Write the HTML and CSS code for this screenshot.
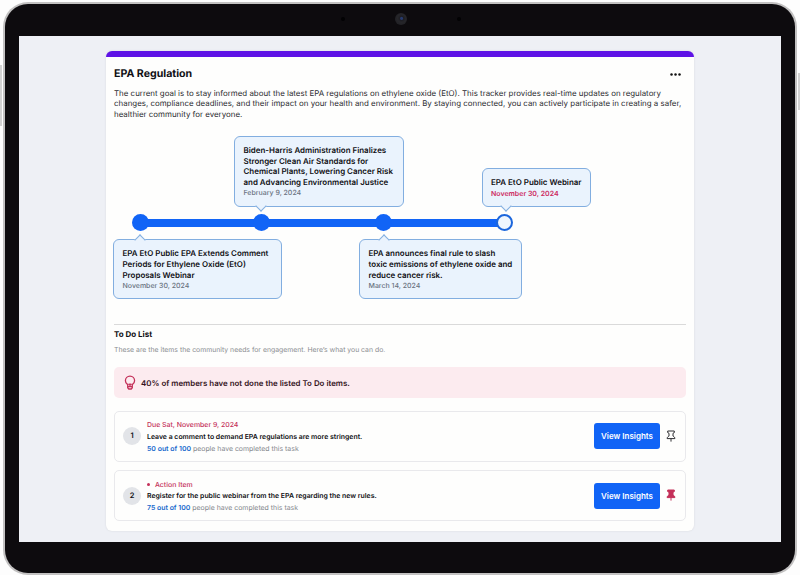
FILE: index.html
```html
<!DOCTYPE html>
<html lang="en">
<head>
<meta charset="utf-8">
<title>EPA Regulation</title>
<link rel="stylesheet" href="styles.css">
</head>
<body>
<div class="tablet">
  <i class="side-key side-key-left"></i>
  <i class="side-key side-key-right"></i>
  <div class="bezel">
    <div class="sensors"><i class="mic"></i><i class="camera"></i><i class="mic"></i></div>
    <main class="screen">
      <article class="card">
        <header class="card-head">
          <h1>EPA Regulation</h1>
          <svg class="more" viewBox="0 0 11 3"><circle cx="1.500" cy="1.500" r="1.250"/><circle cx="5.500" cy="1.500" r="1.250"/><circle cx="9.500" cy="1.500" r="1.250"/></svg>
        </header>
        <p class="intro">The current goal is to stay informed about the latest EPA regulations on ethylene oxide (EtO). This tracker provides real-time updates on regulatory<br>changes, compliance deadlines, and their impact on your health and environment. By staying connected, you can actively participate in creating a safer,<br>healthier community for everyone.</p>

        <section class="timeline">
          <div class="events events-above">
            <div class="event event-b">
              <h2>Biden-Harris Administration Finalizes<br>Stronger Clean Air Standards for<br>Chemical Plants, Lowering Cancer Risk<br>and Advancing Environmental Justice</h2>
              <time>February 9, 2024</time>
            </div>
            <div class="event event-d">
              <h2>EPA EtO Public Webinar</h2>
              <time class="upcoming">November 30, 2024</time>
            </div>
          </div>
          <div class="track"><i class="node"></i><i class="node"></i><i class="node"></i><i class="node node-open"></i></div>
          <div class="events events-below">
            <div class="event event-a">
              <h2>EPA EtO Public EPA Extends Comment<br>Periods for Ethylene Oxide (EtO)<br>Proposals Webinar</h2>
              <time>November 30, 2024</time>
            </div>
            <div class="event event-c">
              <h2>EPA announces final rule to slash<br>toxic emissions of ethylene oxide and<br>reduce cancer risk.</h2>
              <time>March 14, 2024</time>
            </div>
          </div>
        </section>

        <section class="todo">
          <h3>To Do List</h3>
          <p class="hint">These are the items the community needs for engagement. Here’s what you can do.</p>
          <div class="alert">
            <svg class="bulb" viewBox="0 0 12 15"><path d="M3.700 12.700V9.600C2.300 8.700 1.400 7.400 1.400 5.700a4.600 4.600 0 0 1 9.200 0c0 1.700-.9 3-2.300 3.900v3.100L7.200 14H4.800zM3.700 11.700h4.600M6 11.700V9.300M4.600 8.800l1.400.7 1.400-.7"/></svg>
            <span>40% of members have not done the listed To Do items.</span>
          </div>
          <div class="task">
            <span class="number">1</span>
            <div class="task-text">
              <span class="tag">Due Sat, November 9, 2024</span>
              <strong class="name">Leave a comment to demand EPA regulations are more stringent.</strong>
              <span class="progress"><b>50 out of 100</b> people have completed this task</span>
            </div>
            <button>View Insights</button>
            <svg class="pin" viewBox="0 0 10 13"><path d="M1.700 1h6.600v1.600L7 3.300v2.800c1.200.5 1.900 1.300 1.900 2.500H1.100c0-1.200.7-2 1.900-2.500V3.300l-1.300-.7zM5 8.600v3"/></svg>
          </div>
          <div class="task">
            <span class="number">2</span>
            <div class="task-text">
              <span class="tag"><i class="bullet"></i>Action Item</span>
              <strong class="name">Register for the public webinar from the EPA regarding the new rules.</strong>
              <span class="progress"><b>75 out of 100</b> people have completed this task</span>
            </div>
            <button>View Insights</button>
            <svg class="pin pin-on" viewBox="0 0 10 13"><path d="M1.700 1h6.600v1.600L7 3.300v2.800c1.200.5 1.900 1.300 1.900 2.500H1.100c0-1.200.7-2 1.900-2.500V3.300l-1.300-.7zM5 8.600v3"/></svg>
          </div>
        </section>
      </article>
    </main>
  </div>
</div>
</body>
</html>
```
FILE: styles.css
```css
* { box-sizing: border-box; }
body {
  margin: 0;
  width: 800px;
  height: 575px;
  overflow: hidden;
  background: #fdfdfd;
  font-family: Inter, "Liberation Sans", sans-serif;
  text-rendering: geometricPrecision;
  color: #101014;
}
h1, h2, h3, p { margin: 0; }
.tablet {
  position: relative;
  width: 794px;
  height: 573px;
  margin: 2px 0 0 3px;
  padding: 2px;
  border-radius: 25px;
  background: #c2c1c1;
}
.side-key {
  position: absolute;
  width: 2px;
  background: #d2d2d2;
}
.side-key-left { left: -3px; top: 63px; height: 61px; }
.side-key-right { right: -3px; top: 71px; height: 37px; }
.bezel {
  position: relative;
  height: 569px;
  padding: 32px 14px 0;
  border-radius: 23px;
  background: #0d0b0e;
}
.sensors {
  position: absolute;
  top: 9px;
  left: 1px;
  right: 0;
  display: flex;
  align-items: center;
  justify-content: center;
  gap: 50px;
}
.mic { width: 4px; height: 4px; border-radius: 50%; background: #020203; }
.camera {
  width: 12px;
  height: 12px;
  border-radius: 50%;
  background: radial-gradient(circle at 55% 45%, #273b70 0 1px, #1d1d23 2px, #26262a 4px, #222226 6px);
}
.screen {
  height: 506px;
  padding: 15px 87px 0;
  background: #eef0f5;
}
.card {
  height: 480px;
  padding: 10px 8px 0;
  border-top: 6px solid #5e12e6;
  border-radius: 6px;
  background: #fefefd;
  box-shadow: 0 0 2px #d5d6dc;
}
.card-head {
  display: flex;
  justify-content: space-between;
  align-items: center;
  height: 14px;
  padding-right: 5px;
}
h1 { font-size: 10.6px; font-weight: 700; line-height: 14px; }
.more { width: 11px; height: 3px; fill: #111; }
.intro {
  margin-top: 6.500px;
  font-size: 7.920px;
  line-height: 10.6px;
  color: #2c2c30;
  white-space: nowrap;
}
.timeline { height: 204.700px; padding-top: 16.700px; }
.events { display: flex; }
.events-above { align-items: flex-end; height: 71px; padding-left: 120px; gap: 78px; }
.events-below { margin: 8px 0 0 -1px; gap: 78px; }
.event {
  position: relative;
  padding: 8px 8px 0 8.500px;
  border: 1px solid #82aee0;
  border-radius: 6px;
  background: #eaf3fd;
  white-space: nowrap;
}
.event::before {
  content: "";
  position: absolute;
  left: 22px;
  width: 7px;
  height: 7px;
  border: 1px solid #82aee0;
  border-width: 0 1px 1px 0;
  background: #eaf3fd;
}
.events-above .event::before { bottom: -4.5px; transform: rotate(45deg); }
.events-below .event::before { top: -4.500px; transform: rotate(225deg); }
.event-a { width: 169px; height: 60px; }
.event-b { width: 170px; height: 71px; }
.event-c { width: 163px; height: 60px; margin-left: -1px; }
.event-d { width: 109px; height: 39px; padding-left: 8px; }
.event-c::before { left: 19.500px; }
.event-d::before { left: 18.500px; }
.event h2 { font-size: 7.940px; font-weight: 600; line-height: 10.6px; }
.event time { display: block; font-size: 7px; font-weight: 500; line-height: 11px; color: #69727f; }
.event .upcoming { color: #cd2a5d; font-weight: 600; }
.track {
  display: flex;
  justify-content: space-between;
  align-items: center;
  width: 382px;
  height: 17px;
  margin: 7.500px 0 0 17.500px;
  background: linear-gradient(#1164f6, #1164f6) 50% 50% / 366px 8px no-repeat;
}
.node { width: 17px; height: 17px; border-radius: 50%; background: #1164f6; }
.node-open { border: 2px solid #1c66dc; background: #eff6fe; }
.todo { border-top: 1px solid #dadada; }
h3 { margin-top: 3px; font-size: 8px; font-weight: 700; line-height: 12px; }
.hint { margin-top: 3.800px; font-size: 6.870px; line-height: 12px; color: #8a8c90; white-space: nowrap; }
.alert {
  display: flex;
  align-items: center;
  gap: 5px;
  height: 31px;
  margin-top: 11.500px;
  padding-left: 10px;
  border-radius: 5px;
  background: #fcebef;
  font-size: 7.920px;
  font-weight: 600;
  color: #35141d;
}
.bulb { width: 12px; height: 15px; fill: none; stroke: #c43059; stroke-width: 1.300; }
.task {
  display: flex;
  align-items: center;
  height: 51px;
  margin-top: 12.700px;
  padding: 0 9px 0 8px;
  border: 1px solid #e9e9ec;
  border-radius: 5px;
}
.task + .task { margin-top: 8.300px; }
.number {
  width: 18px;
  height: 18px;
  border-radius: 50%;
  background: #e2e4e8;
  font-size: 7.500px;
  font-weight: 600;
  line-height: 18px;
  text-align: center;
}
.task-text {
  display: flex;
  flex: 1;
  flex-direction: column;
  margin-left: 6px;
  padding-top: 1px;
  line-height: 11.700px;
  font-size: 6.930px;
  white-space: nowrap;
}
.tag { display: flex; align-items: center; color: #c43059; font-weight: 500; }
.bullet { width: 3px; height: 3px; margin-right: 5px; border-radius: 50%; background: #c43059; }
.name { font-size: 6.910px; font-weight: 600; }
.progress { color: #85888e; }
.progress b { color: #1668cc; font-weight: 600; }
button {
  width: 66px;
  height: 26px;
  padding: 0;
  border: 0;
  border-radius: 3px;
  background: #1164f6;
  font: 600 8px/26px Inter, "Liberation Sans", sans-serif;
  color: #fff;
}
.pin { width: 10px; height: 13px; margin-left: 6px; fill: none; stroke: #2e2e32; stroke-width: 1; }
.pin-on { fill: #c43059; stroke: #c43059; }
```
